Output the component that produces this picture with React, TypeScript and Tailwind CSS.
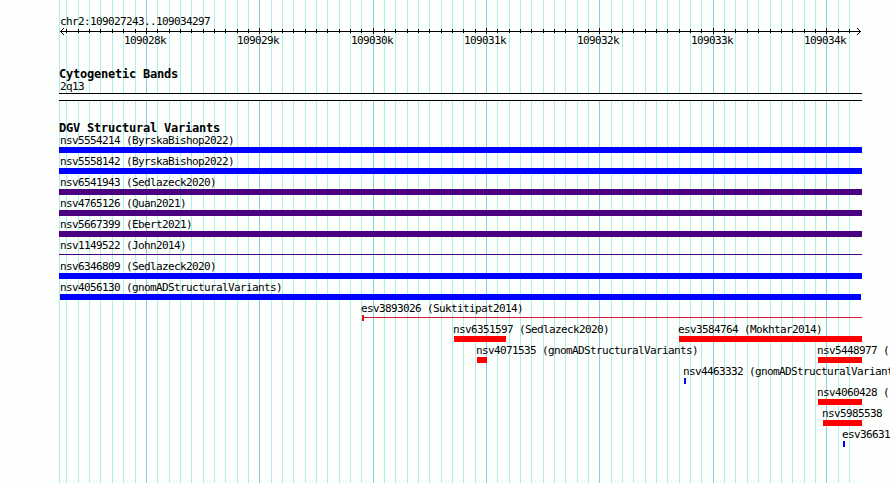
import React from 'react';

type Feature = {
  label: string;
  start: number;
  end: number;
  color: string;
  kind?: 'line' | 'point';
};

const BLUE = 'bg-[#0000ff]';
const INDIGO = 'bg-[#4b0082]';
const RED = 'bg-[#ff0000]';

const minorLines = [
  59, 66, 78, 89, 100, 112, 123, 135, 157, 169, 180, 191, 203, 214, 225, 237, 248,
  271, 282, 293, 305, 316, 327, 339, 350, 361, 384, 395, 407, 418, 429, 441, 452, 463, 475,
  497, 509, 520, 531, 543, 554, 565, 577, 588, 611, 622, 633, 645, 656, 667, 679, 690, 701,
  724, 735, 747, 758, 770, 781, 792, 804, 815, 838, 849,
];

const majorLines = [
  { x: 146, label: '109028k' },
  { x: 259, label: '109029k' },
  { x: 373, label: '109030k' },
  { x: 486, label: '109031k' },
  { x: 599, label: '109032k' },
  { x: 713, label: '109033k' },
  { x: 826, label: '109034k' },
];

// Each entry is one row of the track
const rows: Feature[][] = [
  [{ label: 'nsv5554214 (ByrskaBishop2022)', start: 59, end: 862, color: BLUE }],
  [{ label: 'nsv5558142 (ByrskaBishop2022)', start: 59, end: 862, color: BLUE }],
  [{ label: 'nsv6541943 (Sedlazeck2020)', start: 59, end: 862, color: INDIGO }],
  [{ label: 'nsv4765126 (Quan2021)', start: 59, end: 862, color: INDIGO }],
  [{ label: 'nsv5667399 (Ebert2021)', start: 59, end: 862, color: INDIGO }],
  [{ label: 'nsv1149522 (John2014)', start: 59, end: 862, color: INDIGO, kind: 'line' }],
  [{ label: 'nsv6346809 (Sedlazeck2020)', start: 59, end: 862, color: BLUE }],
  [{ label: 'nsv4056130 (gnomADStructuralVariants)', start: 60, end: 861, color: BLUE }],
  [{ label: 'esv3893026 (Suktitipat2014)', start: 362, end: 862, color: RED, kind: 'point' }],
  [
    { label: 'nsv6351597 (Sedlazeck2020)', start: 454, end: 506, color: RED },
    { label: 'esv3584764 (Mokhtar2014)', start: 679, end: 862, color: RED },
  ],
  [
    { label: 'nsv4071535 (gnomADStructuralVariants)', start: 477, end: 487, color: RED },
    { label: 'nsv5448977 (', start: 818, end: 862, color: RED },
  ],
  [{ label: 'nsv4463332 (gnomADStructuralVariants)', start: 684, end: 686, color: BLUE }],
  [{ label: 'nsv4060428 (', start: 818, end: 862, color: RED }],
  [{ label: 'nsv5985538', start: 823, end: 862, color: RED }],
  [{ label: 'esv36631', start: 843, end: 845, color: BLUE }],
];

const Gridlines = () => (
  <svg className="absolute inset-0" width="890" height="483" shapeRendering="crispEdges">
    {minorLines.map((x) => (
      <rect key={x} x={x} y="0" width="1" height="483" fill="#afeeee" />
    ))}
    {majorLines.map(({ x }) => (
      <rect key={x} x={x} y="0" width="1" height="483" fill="#87ceeb" />
    ))}
  </svg>
);

const Ruler = () => (
  <div className="relative h-[21px]">
    <svg className="block" width="890" height="9" shapeRendering="crispEdges">
      <rect x="60" y="4" width="801" height="1" />
      {minorLines.slice(1).map((x) => (
        <rect key={x} x={x} y="2" width="1" height="4" />
      ))}
      {majorLines.map(({ x }) => (
        <rect key={x} x={x} y="1" width="1" height="6" />
      ))}
      {[1, 2, 3].map((d) => (
        <React.Fragment key={d}>
          <rect x={60 + d} y={4 - d} width="1" height="1" />
          <rect x={60 + d} y={4 + d} width="1" height="1" />
          <rect x={860 - d} y={4 - d} width="1" height="1" />
          <rect x={860 - d} y={4 + d} width="1" height="1" />
        </React.Fragment>
      ))}
    </svg>
    {majorLines.map(({ x, label }) => (
      <span key={x} className="absolute top-[7px]" style={{ left: x - 22 }}>
        {label}
      </span>
    ))}
  </div>
);

const Glyph = ({ start, end, color, kind }: Feature) => {
  const width = end - start;
  if (kind === 'line') {
    return <div className={`mt-[2px] h-px ${color}`} style={{ width }} />;
  }
  if (kind === 'point') {
    return (
      <div className="flex items-start" style={{ width }}>
        <div className={`h-[6px] w-[2px] ${color}`} />
        <div className="mt-[2px] h-px flex-1 bg-[#dc143c]" />
      </div>
    );
  }
  return <div className={`h-[6px] ${color}`} style={{ width }} />;
};

// Full-width features keep their label one pixel inside the panel edge
const labelClass = (start: number) => {
  if (start === 59) return 'h-[13px] pl-px';
  if (start === 60) return 'h-[13px]';
  return 'h-[13px] -ml-px';
};

export default function App() {
  return (
    <div className="relative h-[483px] w-[890px] overflow-hidden bg-[#fdfffc] font-['DejaVu_Sans_Mono',monospace] text-[11px] leading-[14px] tracking-[-0.622px] whitespace-pre text-black">
      <Gridlines />
      <div className="relative pt-[15px]">
        <div className="h-[12px] pl-[60px]">chr2:109027243..109034297</div>
        <Ruler />

        {/* Cytogenetic Bands */}
        <div className="mt-[20px] h-[12px] pl-[59px] text-[12px] leading-[12px] font-bold tracking-[-0.224px]">Cytogenetic Bands</div>
        <div className="h-[13px] pl-[60px]">2q13</div>
        <div className="ml-[59px] h-[8px] w-[803px] border-y border-black bg-[#fdfffc]"></div>

        {/* Structural variants */}
        <div className="mt-[21px] h-[12px] pl-[59px] text-[12px] leading-[12px] font-bold tracking-[-0.224px]">DGV Structural Variants</div>
        {rows.map((row, i) => (
          <div key={i} className="relative h-[21px]">
            {row.map((f) => (
              <div key={f.label} className="absolute top-0" style={{ left: f.start }}>
                <div className={labelClass(f.start)}>{f.label}</div>
                <Glyph {...f} />
              </div>
            ))}
          </div>
        ))}
      </div>
    </div>
  );
}
